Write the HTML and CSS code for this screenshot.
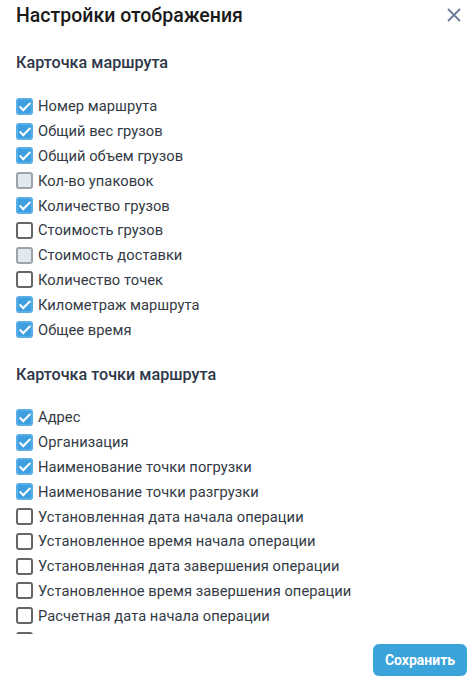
FILE: index.html
```html
<!DOCTYPE html>
<html lang="ru">
<head>
<meta charset="utf-8">
<link rel="stylesheet" href="styles.css">
</head>
<body>
<div class="modal">
  <div class="header">
    <div class="title">Настройки отображения</div>
    <button class="close" aria-label="Закрыть">
      <svg width="14" height="14" viewBox="0 0 14 14"><path d="M1.5 1.5L12.5 12.5M12.5 1.5L1.5 12.5" stroke="#6b7a99" stroke-width="1.8" stroke-linecap="round"/></svg>
    </button>
  </div>
  <div class="body">
    <div class="section-title">Карточка маршрута</div>
    <div class="list">
      <label class="row"><span class="cb checked"></span>Номер маршрута</label>
      <label class="row"><span class="cb checked"></span>Общий вес грузов</label>
      <label class="row"><span class="cb checked"></span>Общий объем грузов</label>
      <label class="row"><span class="cb disabled"></span>Кол-во упаковок</label>
      <label class="row"><span class="cb checked"></span>Количество грузов</label>
      <label class="row"><span class="cb"></span>Стоимость грузов</label>
      <label class="row"><span class="cb disabled"></span>Стоимость доставки</label>
      <label class="row"><span class="cb"></span>Количество точек</label>
      <label class="row"><span class="cb checked"></span>Километраж маршрута</label>
      <label class="row"><span class="cb checked"></span>Общее время</label>
    </div>
    <div class="section-title second">Карточка точки маршрута</div>
    <div class="list">
      <label class="row"><span class="cb checked"></span>Адрес</label>
      <label class="row"><span class="cb checked"></span>Организация</label>
      <label class="row"><span class="cb checked"></span>Наименование точки погрузки</label>
      <label class="row"><span class="cb checked"></span>Наименование точки разгрузки</label>
      <label class="row"><span class="cb"></span>Установленная дата начала операции</label>
      <label class="row"><span class="cb"></span>Установленное время начала операции</label>
      <label class="row"><span class="cb"></span>Установленная дата завершения операции</label>
      <label class="row"><span class="cb"></span>Установленное время завершения операции</label>
      <label class="row"><span class="cb"></span>Расчетная дата начала операции</label>
      <label class="row"><span class="cb"></span>Расчетное время начала операции</label>
    </div>
  </div>
  <div class="footer">
    <button class="save">Сохранить</button>
  </div>
</div>
</body>
</html>
```

FILE: styles.css
```css
* { box-sizing: border-box; }
html, body { margin: 0; padding: 0; background: #fff; }
body { font-family: Roboto, "Noto Sans", sans-serif; }
.modal {
  width: 476px;
  height: 682px;
  display: flex;
  flex-direction: column;
  overflow: hidden;
}
.header {
  display: flex;
  align-items: center;
  justify-content: space-between;
  padding: 3px 14px 0 16px;
  height: 27px;
}
.title {
  font-size: 19.5px;
  font-weight: 500;
  color: #1a1a1a;
}
.close {
  border: 0;
  background: none;
  padding: 0;
  width: 16px;
  height: 16px;
  display: flex;
  align-items: center;
  justify-content: center;
  cursor: pointer;
}
.body {
  flex: 1;
  overflow: hidden;
  padding: 25px 16px 0 16px;
}
.section-title {
  font-size: 16.2px;
  font-weight: 500;
  color: #2d3748;
  line-height: 22px;
  margin-bottom: 20px;
}
.section-title.second { margin-top: 22px; margin-bottom: 19px; }
.list {
  display: flex;
  flex-direction: column;
}
.row {
  display: flex;
  align-items: center;
  height: 24.8px;
  font-size: 14.7px;
  color: #333a45;
  letter-spacing: 0.05px;
  white-space: nowrap;
}
.cb {
  width: 17px;
  height: 17px;
  border: 2px solid #666;
  border-radius: 3px;
  margin-right: 5px;
  background: #fff;
  flex: none;
  position: relative;
}
.cb.disabled {
  background: #e2e8f0;
  border-color: #9ea3a8;
}
.cb.checked {
  background: #3d9ee0;
  border-color: #5aaee6;
}
.cb.checked::after {
  content: "";
  position: absolute;
  left: 4px;
  top: 0px;
  width: 4px;
  height: 9px;
  border: solid #fff;
  border-width: 0 2px 2px 0;
  transform: rotate(45deg);
}
.footer {
  display: flex;
  justify-content: flex-end;
  padding: 10px 9px 6px 0;
  height: 48px;
}
.save {
  width: 94px;
  height: 32px;
  border: 0;
  border-radius: 6px;
  background: #3aa3d9;
  color: #fff;
  font-family: Roboto, sans-serif;
  font-weight: 700;
  font-size: 14px;
  cursor: pointer;
}
```
